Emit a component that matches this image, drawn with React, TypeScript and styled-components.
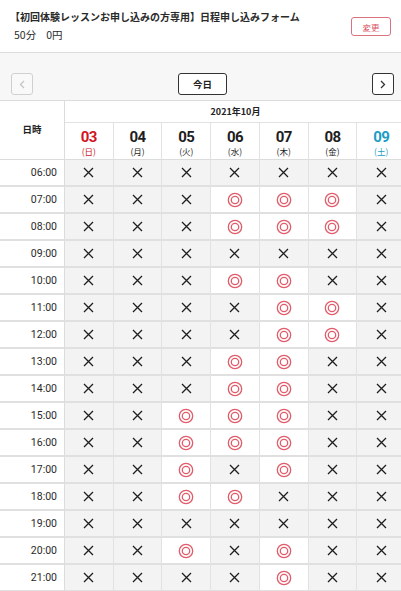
import styled, { createGlobalStyle } from "styled-components";

const GlobalStyle = createGlobalStyle`
  html, body {
    margin: 0;
    padding: 0;
    background: #ffffff;
    overflow-x: hidden;
  }
  body {
    font-family: "Noto Sans CJK JP", "Noto Sans", sans-serif;
    color: #222;
  }
`;

const DAYS = [
    { num: "03", wd: "日", tone: "sun" },
    { num: "04", wd: "月", tone: "" },
    { num: "05", wd: "火", tone: "" },
    { num: "06", wd: "水", tone: "" },
    { num: "07", wd: "木", tone: "" },
    { num: "08", wd: "金", tone: "" },
    { num: "09", wd: "土", tone: "sat" },
];

// o = 空きあり, x = 予約不可
const SLOTS: [string, string][] = [
    ["06:00", "xxxxxxx"],
    ["07:00", "xxxooox"],
    ["08:00", "xxxooox"],
    ["09:00", "xxxxxxx"],
    ["10:00", "xxxooxx"],
    ["11:00", "xxxxoox"],
    ["12:00", "xxxxoox"],
    ["13:00", "xxxooxx"],
    ["14:00", "xxxooxx"],
    ["15:00", "xxoooxx"],
    ["16:00", "xxoooxx"],
    ["17:00", "xxoxoxx"],
    ["18:00", "xxooxxx"],
    ["19:00", "xxxxxxx"],
    ["20:00", "xxoxoxx"],
    ["21:00", "xxxxoxx"],
];

const Cross = () => (
    <svg width="11" height="11" viewBox="0 0 11 11">
        <path d="M1 1L10 10M10 1L1 10" stroke="#1e1e1e" strokeWidth="1.3" fill="none" />
    </svg>
);

const Maru = () => (
    <svg width="16" height="16" viewBox="0 0 16 16">
        <circle cx="8" cy="8" r="6.7" stroke="#e05c6a" strokeWidth="1.3" fill="none" />
        <circle cx="8" cy="8" r="3.7" stroke="#e05c6a" strokeWidth="1.3" fill="none" />
    </svg>
);

const Chevron = ({ dir, color }: { dir: "l" | "r"; color: string }) => (
    <svg width="6" height="9" viewBox="0 0 6 9">
        <path
            d={dir === "l" ? "M5 1L1.5 4.5L5 8" : "M1 1L4.5 4.5L1 8"}
            stroke={color}
            strokeWidth="1.3"
            fill="none"
        />
    </svg>
);

/*---> Main Component <---*/
const App = () => {
    return (
        <Page>
            <GlobalStyle />
            <Header>
                <TitleBlock>
                    <Title>【初回体験レッスンお申し込みの方専用】日程申し込みフォーム</Title>
                    <Meta>
                        <span>50分</span>
                        <span>0円</span>
                    </Meta>
                </TitleBlock>
                <ChangeButton>変更</ChangeButton>
            </Header>

            <Nav>
                <ArrowButton $disabled>
                    <Chevron dir="l" color="#c4c4c4" />
                </ArrowButton>
                <TodayButton>今日</TodayButton>
                <ArrowButton>
                    <Chevron dir="r" color="#333" />
                </ArrowButton>
            </Nav>

            <Grid>
                <CornerCell>日時</CornerCell>
                <MonthCell>2021年10月</MonthCell>
                {DAYS.map((d) => (
                    <DayCell key={d.num} $tone={d.tone}>
                        <DayNum>{d.num}</DayNum>
                        <DayWeek>({d.wd})</DayWeek>
                    </DayCell>
                ))}

                {SLOTS.map(([time, row]) => (
                    <Row key={time}>
                        <TimeCell>{time}</TimeCell>
                        {row.split("").map((s, i) => (
                            <SlotCell key={i} $open={s === "o"}>
                                {s === "o" ? <Maru /> : <Cross />}
                            </SlotCell>
                        ))}
                    </Row>
                ))}
            </Grid>
        </Page>
    );
};

export default App;

const Page = styled.div`
    width: 406px;
    background: #f7f7f7;
`;

const Header = styled.div`
    height: 52px;
    background: #ffffff;
    border-bottom: 1px solid #dcdcdc;
    display: flex;
    align-items: flex-start;
    justify-content: space-between;
    padding: 0 15px 0 10px;
    box-sizing: content-box;
`;

const TitleBlock = styled.div`
    display: flex;
    flex-direction: column;
    padding-top: 10px;
`;

const Title = styled.div`
    font-size: 10px;
    line-height: 14px;
    font-weight: 700;
    color: #2a2a2a;
`;

const Meta = styled.div`
    display: flex;
    gap: 10px;
    margin-top: 4px;
    padding-left: 4px;
    font-size: 10.5px;
    line-height: 14px;
    color: #2a2a2a;
`;

const ChangeButton = styled.div`
    margin-top: 17px;
    width: 40px;
    height: 19px;
    box-sizing: border-box;
    border: 1px solid #d9737f;
    border-radius: 3px;
    color: #d9505e;
    background: #ffffff;
    font-size: 8.5px;
    display: flex;
    align-items: center;
    justify-content: center;
`;

const Nav = styled.div`
    height: 48px;
    padding: 20px 12px 7px 11px;
    box-sizing: border-box;
    display: flex;
    align-items: flex-start;
    justify-content: space-between;
    border-bottom: 1px solid #dcdcdc;
`;

const ArrowButton = styled.div<{ $disabled?: boolean }>`
    width: 22px;
    height: 22px;
    box-sizing: border-box;
    border: 1px solid ${(p) => (p.$disabled ? "#d0d0d0" : "#333")};
    border-radius: 3px;
    background: ${(p) => (p.$disabled ? "#f9f9f9" : "#ffffff")};
    display: flex;
    align-items: center;
    justify-content: center;
`;

const TodayButton = styled.div`
    width: 49px;
    height: 22px;
    box-sizing: border-box;
    border: 1px solid #333;
    border-radius: 3px;
    background: #ffffff;
    font-size: 9.5px;
    font-weight: 700;
    display: flex;
    align-items: center;
    justify-content: center;
`;

const Grid = styled.div`
    display: grid;
    grid-template-columns: 65px repeat(7, 1fr);
    grid-template-rows: 22px 37px;
    background: #ffffff;
`;

const CornerCell = styled.div`
    grid-row: 1 / span 2;
    border-right: 1px solid #dcdcdc;
    border-bottom: 1px solid #dcdcdc;
    display: flex;
    align-items: center;
    justify-content: center;
    font-size: 9.5px;
    font-weight: 700;
    padding-bottom: 2px;
`;

const MonthCell = styled.div`
    grid-column: 2 / span 7;
    border-bottom: 1px solid #e2e2e2;
    display: flex;
    align-items: center;
    justify-content: center;
    font-size: 9px;
    font-weight: 700;
`;

const DayCell = styled.div<{ $tone: string }>`
    border-right: 1px solid #e2e2e2;
    border-bottom: 1px solid #dcdcdc;
    box-sizing: border-box;
    display: flex;
    flex-direction: column;
    align-items: center;
    justify-content: center;
    padding-top: 4px;
    color: ${(p) => (p.$tone === "sun" ? "#d3131f" : p.$tone === "sat" ? "#1b9dc4" : "#1e1e1e")};
`;

const DayNum = styled.div`
    font-family: "Roboto", sans-serif;
    font-size: 15px;
    font-weight: 700;
    line-height: 16px;
    letter-spacing: -0.6px;
`;

const DayWeek = styled.div`
    font-size: 8.5px;
    line-height: 12px;
`;

const Row = styled.div`
    display: contents;
`;

const TimeCell = styled.div`
    height: 25px;
    border-bottom: 2px solid #e0e0e0;
    border-right: 1px solid #dcdcdc;
    display: flex;
    align-items: center;
    justify-content: flex-end;
    padding-right: 7px;
    font-family: "Roboto", sans-serif;
    font-size: 10.5px;
    color: #2a2a2a;
`;

const SlotCell = styled.div<{ $open: boolean }>`
    height: 25px;
    border-bottom: 2px solid #e0e0e0;
    border-right: 1px solid #e2e2e2;
    background: ${(p) => (p.$open ? "#ffffff" : "#f3f3f3")};
    display: flex;
    align-items: center;
    justify-content: center;
`;
